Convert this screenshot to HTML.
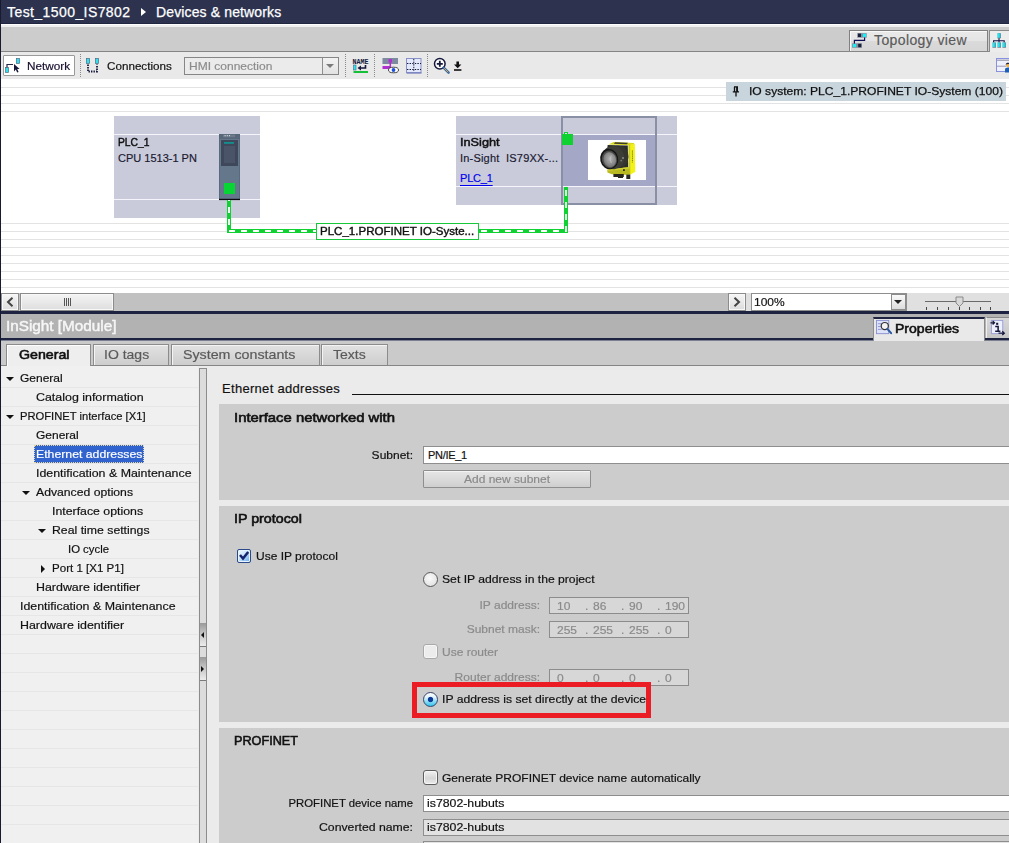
<!DOCTYPE html>
<html>
<head>
<meta charset="utf-8">
<title>Devices &amp; networks</title>
<style>
html,body{margin:0;padding:0;}
body{width:1009px;height:843px;overflow:hidden;position:relative;background:#fff;font-family:"Liberation Sans",sans-serif;font-size:12px;color:#000;}
.a{position:absolute;}
.t{position:absolute;white-space:nowrap;line-height:16px;height:16px;font-size:12px;-webkit-text-stroke:0.18px;}
.b{font-weight:bold;}
.g{color:#8a8a8a;}
.r{text-align:right;}
.gl{position:absolute;left:1px;width:1008px;height:1px;background:#e3e3e3;}
.sec{position:absolute;left:219px;width:790px;background:#cccccc;}
.inp{position:absolute;left:423px;width:590px;height:15px;border:1px solid #8e8e8e;background:#fff;}
.ipf{position:absolute;left:549px;width:138px;height:15px;border:1px solid #8c8c8c;background:#d7d7d7;}
.cb{position:absolute;width:13px;height:13px;border:1px solid #a9a9a9;border-radius:3px;background:linear-gradient(#f2f2f2,#d6d6d6 55%,#ececec);box-shadow:inset 0 0 0 1px #f6f6f6;}
.tr{position:absolute;left:1px;width:197px;height:1px;background:#e6e6e6;}
.tab{position:absolute;top:344px;height:20px;border:1px solid #8c8c8c;border-bottom:none;background:linear-gradient(#e2e2e2,#cdcdcd);box-shadow:inset 1px 1px 0 #f4f4f4;}
</style>
</head>
<body>

<!-- ===== title bar ===== -->
<div class="a" style="left:0;top:0;width:1009px;height:24px;background:#2d334f;"></div>
<div class="t" style="left:7px;top:3px;font-size:14px;line-height:18px;height:18px;color:#fff;letter-spacing:0.42px;-webkit-text-stroke:0.25px #fff;">Test_1500_IS7802</div>
<div class="a" style="left:141px;top:8px;width:0;height:0;border-left:5px solid #fff;border-top:4px solid transparent;border-bottom:4px solid transparent;"></div>
<div class="t" style="left:156px;top:3px;font-size:14px;line-height:18px;height:18px;color:#fff;letter-spacing:0.13px;-webkit-text-stroke:0.25px #fff;">Devices &amp; networks</div>

<!-- ===== view tab band ===== -->
<div class="a" style="left:0;top:23px;width:1009px;height:1px;background:#20263f;"></div>
<div class="a" style="left:0;top:24px;width:1009px;height:3px;background:#efefef;border-top:1px solid #fdfdfd;box-sizing:border-box;"></div>
<div class="a" style="left:0;top:27px;width:1009px;height:24px;background:#cccccc;"></div>
<div class="a" style="left:0;top:51px;width:1009px;height:1px;background:#858585;"></div>

<!-- ===== toolbar ===== -->
<div class="a" id="toolbar" style="left:0;top:52px;width:1009px;height:27px;background:#e9e9e9;"></div>
<!-- topology tab -->
<div class="a" style="left:849px;top:30px;width:139px;height:21px;border:1px solid #808080;border-bottom:none;background:linear-gradient(#e9e9e9 0,#e4e4e4 50%,#dadada 52%,#d6d6d6 100%);box-shadow:inset 1px 1px 0 #f8f8f8;box-sizing:border-box;"></div>
<svg class="a" style="left:851px;top:32px;" width="18" height="17" viewBox="851 32 18 17">
  <rect x="857.2" y="33.1" width="9.5" height="4.6" fill="#868c9e"/>
  <rect x="858" y="33.6" width="3" height="3.4" fill="#1c1f38"/>
  <rect x="862.9" y="33.7" width="3.2" height="3.3" fill="#18f0f4"/>
  <rect x="852.1" y="43.3" width="9.9" height="4.5" fill="#868c9e"/>
  <rect x="853" y="43.9" width="3.1" height="3.3" fill="#18f0f4"/>
  <rect x="858.2" y="43.8" width="3" height="3.4" fill="#1c1f38"/>
  <path d="M864.6 37.5 V40.4 H854.4 V43.4" fill="none" stroke="#101058" stroke-width="1.2"/>
</svg>
<div class="t" id="topo" style="left:874px;top:31px;font-size:14px;line-height:18px;height:18px;color:#5a5a5a;letter-spacing:0.39px;">Topology view</div>
<!-- next (active) tab -->
<div class="a" style="left:989px;top:30px;width:24px;height:22px;border:1px solid #8a8a8a;border-bottom:none;background:#ececec;box-sizing:border-box;"></div>
<svg class="a" style="left:990px;top:32px;" width="19" height="17" viewBox="990 32 19 17">
  <defs><linearGradient id="cy" x1="0" y1="0" x2="1" y2="0"><stop offset="0" stop-color="#7af4f8"/><stop offset="0.5" stop-color="#10dce8"/><stop offset="1" stop-color="#30c8d8"/></linearGradient></defs>
  <path d="M999 38 V42.5 M993.6 42.5 V40.8 H1004.2 V42.5" fill="none" stroke="#101048" stroke-width="1.1"/>
  <rect x="997.3" y="33.3" width="3.6" height="5" fill="#6a7488"/>
  <rect x="997.3" y="33.3" width="3.1" height="4.5" fill="url(#cy)"/>
  <rect x="992.4" y="42.5" width="3.6" height="5.2" fill="#6a7488"/>
  <rect x="992.4" y="42.5" width="3.1" height="4.6" fill="url(#cy)"/>
  <rect x="997.4" y="42.5" width="3.6" height="5.2" fill="#6a7488"/>
  <rect x="997.4" y="42.5" width="3.1" height="4.6" fill="url(#cy)"/>
  <rect x="1002.4" y="42.5" width="3.6" height="5.2" fill="#6a7488"/>
  <rect x="1002.4" y="42.5" width="3.1" height="4.6" fill="url(#cy)"/>
</svg>

<!-- Network button -->
<div class="a" style="left:3px;top:55px;width:72px;height:21px;border:1px solid #9a9a9a;background:#fff;box-sizing:border-box;border-radius:1px;"></div>
<svg class="a" style="left:4px;top:56px;" width="20" height="18" viewBox="0 0 20 18">
  <rect x="12.5" y="2.5" width="3" height="5" fill="#2fe0f0" stroke="#4a6a80" stroke-width="0.7"/>
  <rect x="1.5" y="11.5" width="3" height="5" fill="#2fe0f0" stroke="#4a6a80" stroke-width="0.7"/>
  <path d="M3 11.5 V8.5 H9" fill="none" stroke="#23284a" stroke-width="1.2"/>
  <path d="M10 8 L10 15.5 L11.8 13.6 L13.2 16.6 L14.6 15.9 L13.2 13 L15.6 13 Z" fill="#15183a"/>
</svg>
<div class="t" id="netw" style="left:27px;top:58px;font-size:11px;color:#1a1030;transform:scaleX(1.0686);transform-origin:left center;">Network</div>
<!-- separator -->
<div class="a vs" style="left:80px;top:54px;height:23px;border-left:1px dotted #8a8a8a;"></div>
<!-- Connections -->
<svg class="a" style="left:85px;top:57px;" width="16" height="17" viewBox="0 0 16 17">
  <rect x="1.5" y="1.5" width="3" height="5" fill="#2fe0f0" stroke="#4a6a80" stroke-width="0.7"/>
  <rect x="10.5" y="1.5" width="3" height="5" fill="#2fe0f0" stroke="#4a6a80" stroke-width="0.7"/>
  <path d="M3 7.5 V14.5 H12 V7.5" fill="none" stroke="#15183a" stroke-width="1.8" stroke-dasharray="1.4 1.1" stroke-linejoin="miter"/>
</svg>
<div class="t" id="conn" style="left:107px;top:58px;font-size:11px;color:#111;transform:scaleX(1.0603);transform-origin:left center;">Connections</div>
<!-- combobox -->
<div class="a" style="left:184px;top:57px;width:155px;height:18px;border:1px solid #868686;background:#ebebeb;box-sizing:border-box;"></div>
<div class="a" style="left:322px;top:58px;width:16px;height:16px;border-left:1px solid #8e8e8e;background:linear-gradient(#f2f2f2,#e2e2e2);box-sizing:border-box;"></div>
<div class="a" style="left:326px;top:64px;width:0;height:0;border-top:4px solid #7a7a7a;border-left:4px solid transparent;border-right:4px solid transparent;"></div>
<div class="t g" id="hmi" style="left:189px;top:58px;font-size:11px;color:#8c8c8c;transform:scaleX(1.0908);transform-origin:left center;">HMI connection</div>
<!-- separators -->
<div class="a vs" style="left:345px;top:54px;height:23px;border-left:1px dotted #8a8a8a;"></div>
<div class="a vs" style="left:374px;top:54px;height:23px;border-left:1px dotted #8a8a8a;"></div>
<div class="a vs" style="left:427px;top:54px;height:23px;border-left:1px dotted #8a8a8a;"></div>
<!-- NAME icon -->
<svg class="a" style="left:352px;top:57px;" width="18" height="18" viewBox="0 0 18 18">
  <text x="0.5" y="7" font-family="Liberation Mono" font-weight="bold" font-size="7" fill="#15183a" textLength="16" lengthAdjust="spacingAndGlyphs">NAME</text>
  <rect x="1.5" y="8" width="2.5" height="5" fill="#2fe0f0" stroke="#4a6a80" stroke-width="0.6"/>
  <path d="M13.5 8 V11 H7" fill="none" stroke="#15183a" stroke-width="1.6"/>
  <path d="M9 8.5 L5.5 11 L9 13.5 Z" fill="#15183a"/>
  <rect x="1.5" y="14" width="14.5" height="2" fill="#18c03a"/>
</svg>
<!-- icon 2 -->
<svg class="a" style="left:382px;top:57px;" width="18" height="18" viewBox="0 0 18 18">
  <rect x="0.5" y="1" width="15.5" height="6" fill="#7e8aa0"/>
  <rect x="6.5" y="2" width="3.5" height="3.5" fill="#b030d0"/>
  <rect x="7.5" y="5" width="1.6" height="5" fill="#b030d0"/>
  <rect x="0.5" y="9" width="8.5" height="3" fill="#b030d0"/>
  <ellipse cx="11.5" cy="13" rx="5" ry="2.8" fill="#fff" stroke="#333" stroke-width="0.9"/>
  <circle cx="11.5" cy="13" r="1.9" fill="#1d4fe0"/>
</svg>
<!-- icon 3 -->
<svg class="a" style="left:406px;top:57px;" width="17" height="18" viewBox="0 0 17 18">
  <rect x="0.5" y="1.5" width="14.5" height="14" fill="#e4e8fb" stroke="#8890c8" stroke-width="1"/>
  <path d="M0.5 16 H15.5" stroke="#7d86c0" stroke-width="1.4"/>
  <path d="M7.8 2 V15 M1 6.5 H15 M1 12.5 H15" stroke="#15183a" stroke-width="1" stroke-dasharray="1.4 1.2" fill="none"/>
</svg>
<!-- zoom icon -->
<svg class="a" style="left:433px;top:57px;" width="18" height="18" viewBox="0 0 18 18">
  <circle cx="6.8" cy="6.8" r="5.3" fill="#fff" stroke="#15183a" stroke-width="1.5"/>
  <path d="M3.8 6.8 H9.8 M6.8 3.8 V9.8" stroke="#15183a" stroke-width="1.8"/>
  <path d="M10.6 10.6 L15.6 15.6" stroke="#3d6a9e" stroke-width="2.6" stroke-linecap="round"/>
  <path d="M11.2 11.2 L15.2 15.2" stroke="#d8b060" stroke-width="0.9"/>
</svg>
<!-- download arrow -->
<svg class="a" style="left:453px;top:60px;" width="10" height="12" viewBox="0 0 10 12">
  <path d="M3.4 1.5 H6.0 V4.6 H8.4 L4.7 8.2 L1.0 4.6 H3.4 Z" fill="#111"/>
  <rect x="1" y="9.2" width="7.4" height="1.6" fill="#111"/>
</svg>
<!-- right icon -->
<svg class="a" style="left:996px;top:57px;" width="13" height="17" viewBox="0 0 13 17">
  <rect x="0.5" y="1.5" width="14" height="13" fill="#f0f1ff" stroke="#8890e0" stroke-width="1"/>
  <path d="M1 3.2 H13" stroke="#9a9aa8" stroke-width="1.2"/>
  <path d="M1 9.2 H10" stroke="#9a9ab0" stroke-width="1"/>
  <circle cx="12" cy="8.2" r="2" fill="#e8b45c"/>
  <path d="M9.8 7.2 Q12 4.8 14 7" fill="#1a1a30" stroke="#1a1a30" stroke-width="0.8"/>
  <path d="M9 15.5 V12.5 Q9 10.4 12 10.4 Q15 10.4 15 12.5 V15.5 Z" fill="#1f5fb0"/>
</svg>


<!-- ===== canvas ===== -->
<div class="a" id="canvas" style="left:0;top:79px;width:1009px;height:214px;background:#fff;"></div>
<div class="gl" style="top:87px;"></div>
<div class="gl" style="top:95px;"></div>
<div class="gl" style="top:103px;"></div>
<div class="gl" style="top:111px;"></div>
<div class="gl" style="top:223px;"></div>
<div class="gl" style="top:231px;"></div>
<div class="gl" style="top:239px;"></div>
<div class="gl" style="top:247px;"></div>
<div class="gl" style="top:255px;"></div>
<div class="gl" style="top:263px;"></div>
<div class="gl" style="top:271px;"></div>
<div class="gl" style="top:279px;"></div>
<div class="gl" style="top:287px;"></div>
<!-- IO system label -->
<div class="a" style="left:726px;top:82px;width:280px;height:19px;background:#c8d5dc;"></div>
<svg class="a" style="left:732px;top:86px;" width="8" height="11" viewBox="0 0 8 11">
  <path d="M2 0.8 H6 M2.5 1 V5.5 M5.3 1 V5.5 M0.8 5.8 H7 M4 6 V10.5" fill="none" stroke="#111" stroke-width="1.3"/>
  <rect x="4.2" y="1" width="1.6" height="4.5" fill="#111"/>
</svg>
<div class="t" id="iosys" style="left:749px;top:83px;font-size:11px;color:#111;-webkit-text-stroke:0.25px #111;transform:scaleX(1.0971);transform-origin:left center;">IO system: PLC_1.PROFINET IO-System (100)</div>

<!-- PLC device -->
<div class="a" style="left:114px;top:116px;width:146px;height:102px;background:#c9cbdb;"></div>
<div class="a" style="left:114px;top:134px;width:146px;height:1px;background:#f4f4fa;"></div>
<div class="a" style="left:114px;top:199px;width:146px;height:1px;background:#f4f4fa;"></div>
<div class="t b" id="plc1" style="left:118px;top:134px;color:#111;font-size:11px;font-weight:normal;-webkit-text-stroke:0.45px #111;transform:scaleX(0.9364);transform-origin:left center;">PLC_1</div>
<div class="t" id="cpu" style="left:118px;top:150px;font-size:11px;color:#1a1a30;">CPU 1513-1 PN</div>
<svg class="a" style="left:219px;top:134px;" width="21" height="67" viewBox="0 0 21 67">
  <rect x="0" y="0" width="21" height="66" fill="#65778a"/>
  <rect x="0" y="0" width="21" height="5" fill="#58677a"/>
  <rect x="4" y="0.6" width="12" height="2.6" fill="#6c7a8a"/>
  <rect x="5.6" y="1.2" width="1" height="1" fill="#e8ecf0"/><rect x="7.8" y="1.2" width="1" height="1" fill="#e8ecf0"/><rect x="10" y="1.2" width="1" height="1" fill="#e8ecf0"/>
  <rect x="0" y="0" width="0.8" height="66" fill="#56677a"/>
  <rect x="20.2" y="0" width="0.8" height="66" fill="#56677a"/>
  <rect x="2" y="6" width="17" height="26" fill="#3f475b"/>
  <rect x="5" y="8" width="10" height="1.8" fill="#13908e"/>
  <rect x="5" y="12" width="11" height="17" fill="#495469"/>
  <rect x="5" y="49" width="11" height="11" fill="#08d436"/>
  <rect x="0" y="64.8" width="21" height="1.3" fill="#0c0c12"/>
</svg>

<!-- InSight device -->
<div class="a" style="left:456px;top:116px;width:221px;height:89px;background:#c9cbdb;"></div>
<div class="a" style="left:563px;top:135px;width:93px;height:52px;background:#a4a8c6;"></div>
<div class="a" style="left:456px;top:134px;width:221px;height:1px;background:#f4f4fa;"></div>
<div class="a" style="left:456px;top:186px;width:221px;height:1px;background:#f4f4fa;"></div>
<div class="a" style="left:561px;top:116px;width:96px;height:89px;border:2px solid #8990a6;box-sizing:border-box;"></div>
<div class="t b" id="ins" style="left:460px;top:134px;color:#111;font-size:11px;font-weight:normal;-webkit-text-stroke:0.45px #111;transform:scaleX(1.1562);transform-origin:left center;">InSight</div>
<div class="t" id="ins2" style="left:460px;top:150px;font-size:11px;color:#1a1a30;white-space:pre;letter-spacing:0.2px;">In-Sight  IS79XX-...</div>
<div class="t" id="plclink" style="left:460px;top:170px;font-size:11px;color:#0000ee;text-decoration:underline;text-underline-offset:3px;letter-spacing:-0.2px;">PLC_1</div>
<div class="a" style="left:588px;top:140px;width:58px;height:40px;background:#fff;"></div>
<svg class="a" id="cam" style="left:588px;top:140px;" width="58" height="40" viewBox="0 0 58 40">
  <defs>
    <filter id="bl" x="-10%" y="-10%" width="120%" height="120%"><feGaussianBlur stdDeviation="0.35"/></filter>
    <radialGradient id="lg" cx="0.55" cy="0.45" r="0.6"><stop offset="0" stop-color="#b4b4b4"/><stop offset="0.6" stop-color="#8c8c8c"/><stop offset="1" stop-color="#6a6a6a"/></radialGradient>
  </defs>
  <g filter="url(#bl)">
    <!-- top yellow -->
    <polygon points="20.5,4.4 25.5,1.9 45.8,3.0 46.8,4.4 41,5.2" fill="#d8d820"/>
    <polygon points="27,2.3 40,2.8 39,4.2 26,3.8" fill="#3a3a28"/>
    <!-- right yellow face -->
    <polygon points="40.6,4.6 46.8,4.2 47.3,31.8 41.6,35" fill="#f2f214"/>
    <polygon points="40.4,4.6 42.2,4.6 42.4,34.4 40.6,34.8" fill="#c9c92a"/>
    <path d="M44.4 10.5 V22.5" stroke="#6a6a20" stroke-width="0.9" stroke-dasharray="1.2 0.7"/>
    <!-- black front body -->
    <polygon points="19.6,5 39.8,5.4 40.2,28 33,29.4 19.4,9" fill="#2c2e2a"/>
    <!-- lower yellow -->
    <polygon points="19.4,29.6 41.6,27 41.6,35 24,34.2 19.4,32.4" fill="#b9b920"/>
    <polygon points="19.4,29.6 41.6,27 41.6,28.4 19.4,31" fill="#d0d030"/>
    <rect x="35" y="29.2" width="1.8" height="1.8" fill="#303020"/>
    <!-- connectors -->
    <rect x="25.4" y="34" width="10.4" height="3" fill="#26261e"/>
    <rect x="30" y="36" width="5" height="2" fill="#26261e"/>
    <rect x="38.3" y="34.6" width="4" height="4.4" fill="#2c2c24"/>
    <!-- lens barrel -->
    <ellipse cx="30" cy="17" rx="10.5" ry="11.2" fill="#34362f"/>
    <ellipse cx="25" cy="17.6" rx="11.2" ry="11.6" transform="rotate(-12 25 17.6)" fill="#3c3e38"/>
    <ellipse cx="21.2" cy="19" rx="9" ry="10.4" transform="rotate(-14 21.2 19)" fill="#161614"/>
    <ellipse cx="21.5" cy="19.3" rx="7.6" ry="8.9" transform="rotate(-14 21.5 19.3)" fill="#4a4a48"/>
    <ellipse cx="21.8" cy="19.7" rx="6.3" ry="7.6" transform="rotate(-14 21.8 19.7)" fill="url(#lg)"/>
    <path d="M23.3 15.5 Q21 19 23.3 23" stroke="#c8c8c8" stroke-width="1" fill="none" opacity="0.7"/>
    <circle cx="35" cy="18" r="1" fill="#8a8a86"/>
    <circle cx="33.2" cy="20.6" r="0.9" fill="#7a7a76"/>
  </g>
</svg>
<!-- green port + nub -->
<div class="a" style="left:564px;top:132px;width:4px;height:3px;border:1px solid #0fd232;box-sizing:border-box;background:#eafbe9;"></div>
<div class="a" style="left:562px;top:134px;width:11px;height:11px;background:#0fd232;"></div>

<!-- green connection -->
<svg class="a" style="left:0;top:180px;" width="700" height="60" viewBox="0 180 700 60">
  <path d="M229 200 V231 H566 V187" fill="none" stroke="#0fd232" stroke-width="4" stroke-linejoin="miter"/>
  <path d="M229 200 V231 H566 V187" fill="none" stroke="#fff" stroke-width="1.8" stroke-dasharray="6 6" stroke-dashoffset="5"/>
</svg>
<!-- label -->
<div class="a" style="left:316px;top:223px;width:163px;height:17px;border:1px solid #18c83a;background:#fff;box-sizing:border-box;"></div>
<div class="t" id="pnlabel" style="left:320px;top:223px;color:#111;font-size:11px;font-weight:normal;-webkit-text-stroke:0.4px #111;transform:scaleX(1.0481);transform-origin:left center;">PLC_1.PROFINET IO-Syste...</div>


<!-- ===== scroll row ===== -->
<div class="a" style="left:0;top:293px;width:1009px;height:18px;background:#c1c1c1;"></div>


<!-- scroll row widgets -->
<div class="a" style="left:746px;top:293px;width:263px;height:18px;background:#e0e0e0;"></div>
<div class="a" style="left:1px;top:293px;width:18px;height:18px;border:1px solid #8c8c8c;box-shadow:inset 0 0 0 1px #f8f8f8;background:linear-gradient(#f6f6f6,#dcdcdc);box-sizing:border-box;"></div>
<svg class="a" style="left:5px;top:297px;" width="10" height="10" viewBox="0 0 10 10"><path d="M7.5 0.8 L3 5 L7.5 9.2" fill="none" stroke="#444" stroke-width="2"/></svg>
<div class="a" style="left:20px;top:293px;width:94px;height:18px;border:1px solid #8c8c8c;box-shadow:inset 0 0 0 1px #f8f8f8;background:linear-gradient(#f4f4f4,#dedede);box-sizing:border-box;"></div>
<div class="a" style="left:64px;top:298px;width:1px;height:8px;background:#555;box-shadow:2px 0 0 #555,4px 0 0 #555,6px 0 0 #555;"></div>
<div class="a" style="left:728px;top:293px;width:18px;height:18px;border:1px solid #8c8c8c;box-shadow:inset 0 0 0 1px #f8f8f8;background:linear-gradient(#f6f6f6,#dcdcdc);box-sizing:border-box;"></div>
<svg class="a" style="left:732px;top:297px;" width="10" height="10" viewBox="0 0 10 10"><path d="M2.5 0.8 L7 5 L2.5 9.2" fill="none" stroke="#444" stroke-width="2"/></svg>
<div class="a" style="left:751px;top:293px;width:156px;height:18px;border:1px solid #8e8e8e;background:#fff;box-sizing:border-box;"></div>
<div class="a" style="left:891px;top:294px;width:15px;height:16px;border:1px solid #8c8c8c;background:linear-gradient(#fafafa,#dcdcdc);box-sizing:border-box;"></div>
<div class="a" style="left:894px;top:300px;width:0;height:0;border-top:4px solid #222;border-left:4px solid transparent;border-right:4px solid transparent;"></div>
<div class="t" id="z100" style="left:754px;top:294px;font-size:11px;color:#111;transform:scaleX(1.0911);transform-origin:left center;">100%</div>
<div class="a" style="left:925px;top:301px;width:66px;height:1px;background:#6a6a6a;"></div>
<div class="a" style="left:926px;top:307px;width:1px;height:3px;background:#444;box-shadow:11px 0 0 #444,22px 0 0 #444,33px 0 0 #444,43px 0 0 #444,54px 0 0 #444,64px 0 0 #444;"></div>
<svg class="a" style="left:955px;top:296px;" width="9" height="12" viewBox="0 0 9 12"><path d="M1 1 H8 V7 L4.5 10.5 L1 7 Z" fill="#d8d8d8" stroke="#8a8a8a" stroke-width="1"/></svg>

<!-- ===== inspector header ===== -->
<div class="a" style="left:0;top:311px;width:1009px;height:3px;background:#1d2340;"></div>
<div class="a" style="left:0;top:314px;width:1009px;height:24px;background:#b2b2b2;"></div>
<div class="a" style="left:0;top:338px;width:1009px;height:2px;background:#1d2340;"></div>
<div class="a" style="left:0;top:340px;width:1009px;height:25px;background:#cacaca;border-top:1px solid #7b7f92;box-sizing:border-box;"></div>
<div class="a" style="left:0;top:365px;width:1009px;height:1px;background:#858585;"></div>


<div class="t" id="insmod" style="left:6px;top:316px;line-height:20px;height:20px;color:#f6f6f6;font-size:14px;font-weight:normal;-webkit-text-stroke:0.45px #f6f6f6;transform:scaleX(1.0922);transform-origin:left center;">InSight [Module]</div>
<!-- properties tab -->
<div class="a" style="left:873px;top:317px;width:112px;height:24px;background:#e9e9e9;border-top:2px solid #1d2340;border-left:1px solid #8e8e8e;border-right:1px solid #8a8a8a;box-sizing:border-box;"></div>
<svg class="a" style="left:876px;top:319px;" width="17" height="17" viewBox="0 0 18 18">
  <rect x="0.5" y="1.5" width="13" height="14" fill="#dfe3fa" stroke="#8a92d0" stroke-width="1"/>
  <path d="M2 5 H6 M2 8 H5 M2 11 H6" stroke="#8a92d0" stroke-width="1"/>
  <circle cx="9.3" cy="7.5" r="3.8" fill="#f4f4f4" stroke="#333" stroke-width="1.3"/>
  <path d="M12 10.5 L16 15" stroke="#2b5aa0" stroke-width="2.2" stroke-linecap="round"/>
</svg>
<div class="t b" id="props" style="left:895px;top:320px;line-height:18px;height:18px;color:#111;font-size:13px;font-weight:normal;-webkit-text-stroke:0.55px #111;transform:scaleX(1.0802);transform-origin:left center;">Properties</div>
<div class="a" style="left:986px;top:317px;width:24px;height:21px;background:linear-gradient(#d8d8d8,#c6c6c6);border-left:1px solid #efefef;border-top:1px solid #8a8a8a;box-sizing:border-box;"></div>
<svg class="a" style="left:990px;top:319px;" width="17" height="17" viewBox="0 0 18 18">
  <rect x="1.5" y="1.5" width="12" height="14" fill="#eef0ff" stroke="#9aa0d8" stroke-width="1"/>
  <path d="M0.5 4 H4.5 M2.8 2.2 L4.8 4 L2.8 5.8" fill="none" stroke="#15183a" stroke-width="1.3"/>
  <rect x="6.5" y="4" width="2.2" height="2.2" fill="#15183a"/>
  <path d="M5.5 8 H8.6 V13 M5.5 13 H11" stroke="#15183a" stroke-width="1.6" fill="none"/>
  <path d="M9 15 H15 M13 13 L15.2 15 L13 17" fill="none" stroke="#15183a" stroke-width="1.3"/>
</svg>
<!-- tabs -->
<div class="a" style="left:6px;top:344px;width:85px;height:23px;border:1px solid #8c8c8c;border-bottom:none;background:#eeeeee;box-sizing:border-box;box-shadow:inset 1px 1px 0 #fff;"></div>
<div class="t b" id="tgen" style="left:19px;top:346px;line-height:18px;height:18px;color:#111;font-size:13px;font-weight:normal;-webkit-text-stroke:0.6px #111;transform:scaleX(1.0919);transform-origin:left center;">General</div>
<div class="tab" style="left:93px;width:76px;box-sizing:border-box;height:21px;"></div>
<div class="t" id="tio" style="left:104px;top:346px;font-size:13px;line-height:18px;height:18px;color:#5a5a5a;transform:scaleX(1.0768);transform-origin:left center;">IO tags</div>
<div class="tab" style="left:171px;width:149px;box-sizing:border-box;height:21px;"></div>
<div class="t" id="tsys" style="left:183px;top:346px;font-size:13px;line-height:18px;height:18px;color:#5a5a5a;transform:scaleX(1.0956);transform-origin:left center;">System constants</div>
<div class="tab" style="left:321px;width:67px;box-sizing:border-box;height:21px;"></div>
<div class="t" id="ttxt" style="left:333px;top:346px;font-size:13px;line-height:18px;height:18px;color:#5a5a5a;transform:scaleX(1.0772);transform-origin:left center;">Texts</div>

<!-- ===== lower panel ===== -->
<div class="a" style="left:0;top:366px;width:1009px;height:477px;background:#ebebeb;"></div>
<div class="a" id="tree" style="left:1px;top:366px;width:197px;height:477px;background:#f0f0f0;"></div>

<!-- tree -->
<div class="tr" style="top:387px;"></div>
<div class="tr" style="top:406px;"></div>
<div class="tr" style="top:425px;"></div>
<div class="tr" style="top:444px;"></div>
<div class="tr" style="top:463px;"></div>
<div class="tr" style="top:482px;"></div>
<div class="tr" style="top:501px;"></div>
<div class="tr" style="top:520px;"></div>
<div class="tr" style="top:539px;"></div>
<div class="tr" style="top:558px;"></div>
<div class="tr" style="top:577px;"></div>
<div class="tr" style="top:596px;"></div>
<div class="tr" style="top:615px;"></div>
<div class="tr" style="top:634px;"></div>
<div class="tr" style="top:653px;"></div>
<div class="tr" style="top:672px;"></div>
<div class="tr" style="top:691px;"></div>
<div class="tr" style="top:710px;"></div>
<div class="tr" style="top:729px;"></div>
<div class="tr" style="top:748px;"></div>
<div class="tr" style="top:767px;"></div>
<div class="tr" style="top:786px;"></div>
<div class="tr" style="top:805px;"></div>
<div class="tr" style="top:824px;"></div>
<div class="t tt" id="tr0" style="left:20px;top:370px;color:#111;font-size:11px;transform:scaleX(1.091);transform-origin:left center;">General</div>
<div class="a" style="left:6px;top:377px;width:0;height:0;border-top:4px solid #111;border-left:4px solid transparent;border-right:4px solid transparent;"></div>
<div class="t tt" id="tr1" style="left:36px;top:389px;color:#111;font-size:11px;transform:scaleX(1.1287);transform-origin:left center;">Catalog information</div>
<div class="t tt" id="tr2" style="left:20px;top:408px;color:#111;font-size:11px;transform:scaleX(1.0181);transform-origin:left center;">PROFINET interface [X1]</div>
<div class="a" style="left:6px;top:415px;width:0;height:0;border-top:4px solid #111;border-left:4px solid transparent;border-right:4px solid transparent;"></div>
<div class="t tt" id="tr3" style="left:36px;top:427px;color:#111;font-size:11px;transform:scaleX(1.091);transform-origin:left center;">General</div>
<div class="a" style="left:34px;top:445px;width:110px;height:18px;background:#3163cf;border:1px dotted #e8d8a0;box-sizing:border-box;"></div>
<div class="t tt" id="tr4" style="left:36px;top:446px;color:#fff;font-size:11px;transform:scaleX(1.1155);transform-origin:left center;">Ethernet addresses</div>
<div class="t tt" id="tr5" style="left:36px;top:465px;color:#111;font-size:11px;transform:scaleX(1.1254);transform-origin:left center;">Identification &amp; Maintenance</div>
<div class="t tt" id="tr6" style="left:36px;top:484px;color:#111;font-size:11px;transform:scaleX(1.1093);transform-origin:left center;">Advanced options</div>
<div class="a" style="left:22px;top:491px;width:0;height:0;border-top:4px solid #111;border-left:4px solid transparent;border-right:4px solid transparent;"></div>
<div class="t tt" id="tr7" style="left:52px;top:503px;color:#111;font-size:11px;transform:scaleX(1.1201);transform-origin:left center;">Interface options</div>
<div class="t tt" id="tr8" style="left:52px;top:522px;color:#111;font-size:11px;transform:scaleX(1.1156);transform-origin:left center;">Real time settings</div>
<div class="a" style="left:38px;top:529px;width:0;height:0;border-top:4px solid #111;border-left:4px solid transparent;border-right:4px solid transparent;"></div>
<div class="t tt" id="tr9" style="left:68px;top:541px;color:#111;font-size:11px;transform:scaleX(1.0307);transform-origin:left center;">IO cycle</div>
<div class="t tt" id="tr10" style="left:52px;top:560px;color:#111;font-size:11px;transform:scaleX(1.0502);transform-origin:left center;">Port 1 [X1 P1]</div>
<div class="a" style="left:41px;top:565px;width:0;height:0;border-left:4px solid #111;border-top:4px solid transparent;border-bottom:4px solid transparent;"></div>
<div class="t tt" id="tr11" style="left:36px;top:579px;color:#111;font-size:11px;transform:scaleX(1.1279);transform-origin:left center;">Hardware identifier</div>
<div class="t tt" id="tr12" style="left:20px;top:598px;color:#111;font-size:11px;transform:scaleX(1.1254);transform-origin:left center;">Identification &amp; Maintenance</div>
<div class="t tt" id="tr13" style="left:20px;top:617px;color:#111;font-size:11px;transform:scaleX(1.1279);transform-origin:left center;">Hardware identifier</div>
<!-- splitter -->
<div class="a" style="left:199px;top:368px;width:8px;height:480px;border:1px solid #8c8c8c;background:#dcdcdc;box-sizing:border-box;"></div>
<div class="a" style="left:200px;top:623px;width:6px;height:24px;background:linear-gradient(#999,#c4c4c4 45%,#ececec);border-bottom:1px solid #7a7a7a;box-sizing:border-box;"></div>
<div class="a" style="left:200px;top:657px;width:6px;height:24px;background:linear-gradient(#999,#c4c4c4 45%,#ececec);border-bottom:1px solid #7a7a7a;box-sizing:border-box;"></div>
<div class="a" style="left:201px;top:632px;width:0;height:0;border-right:3px solid #111;border-top:3px solid transparent;border-bottom:3px solid transparent;"></div>
<div class="a" style="left:201px;top:666px;width:0;height:0;border-left:3px solid #111;border-top:3px solid transparent;border-bottom:3px solid transparent;"></div>

<!-- content -->

<div class="t" id="eth" style="letter-spacing:0.3px;left:222px;top:380px;font-size:13px;line-height:18px;height:18px;color:#111;">Ethernet addresses</div>
<div class="a" style="left:352px;top:394px;width:657px;height:1px;background:#111;"></div>

<!-- section 1 -->
<div class="sec" style="top:404px;height:96px;"></div>
<div class="t b" id="s1" style="left:234px;top:409px;line-height:18px;height:18px;color:#111;font-size:13px;font-weight:normal;-webkit-text-stroke:0.6px #111;transform:scaleX(1.1426);transform-origin:left center;">Interface networked with</div>
<div class="t r" id="subn" style="left:313px;width:100px;top:447px;color:#111;font-size:11px;transform:scaleX(1.0911);transform-origin:right center;">Subnet:</div>
<div class="inp" style="top:446px;height:16px;"></div>
<div class="t" id="pnie" style="left:428px;top:447px;color:#111;font-size:11px;letter-spacing:-0.3px;">PN/IE_1</div>
<div class="a" style="left:423px;top:470px;width:168px;height:18px;border:1px solid #8e8e8e;border-radius:1px;background:linear-gradient(#e6e6e6,#cfcfcf);box-sizing:border-box;box-shadow:inset 0 1px 0 #f4f4f4;"></div>
<div class="t g" id="addsub" style="left:423px;width:168px;text-align:center;top:471px;color:#8a8a8a;font-size:11px;transform:scaleX(1.0909);transform-origin:center center;">Add new subnet</div>

<!-- section 2 -->
<div class="sec" style="top:506px;height:216px;"></div>
<div class="t b" id="s2" style="left:234px;top:510px;line-height:18px;height:18px;color:#111;font-size:13px;font-weight:normal;-webkit-text-stroke:0.6px #111;transform:scaleX(1.0965);transform-origin:left center;">IP protocol</div>
<!-- checked checkbox -->
<div class="a" style="left:237px;top:549px;width:14px;height:14px;border:1px solid #2a4a8a;border-radius:2px;background:linear-gradient(135deg,#f4faff 0%,#cfe6fb 40%,#62aaf0 100%);box-sizing:border-box;box-shadow:inset 0 0 0 1px #e8f4ff;"></div>
<svg class="a" style="left:238px;top:550px;" width="12" height="12" viewBox="0 0 12 12"><path d="M2 5 L5 8.6 L10.2 2" fill="none" stroke="#15246e" stroke-width="2.5"/></svg>
<div class="t" id="useip" style="left:256px;top:548px;color:#111;font-size:11px;transform:scaleX(1.0908);transform-origin:left center;">Use IP protocol</div>
<!-- radio 1 -->
<div class="a" style="left:423px;top:572px;width:15px;height:15px;border:1px solid #5a5a5a;border-radius:50%;background:radial-gradient(circle at 45% 40%,#fafafa,#dcdcdc);box-sizing:border-box;"></div>
<div class="t" id="setip" style="left:442px;top:571px;color:#111;font-size:11px;transform:scaleX(1.1056);transform-origin:left center;">Set IP address in the project</div>
<div class="t r g" id="ipaddr" style="left:440px;width:100px;top:597px;font-size:11px;transform:scaleX(1.0907);transform-origin:right center;">IP address:</div>
<div class="ipf" style="top:597px;"></div>
<div class="t g ipt" style="left:557px;top:598px;font-size:11px;transform:scaleX(1.0906);transform-origin:left center;">10</div><div class="t g ipt" style="left:585px;top:598px;font-size:11px;transform:scaleX(1.0918);transform-origin:left center;">.</div>
<div class="t g ipt" style="left:593px;top:598px;font-size:11px;transform:scaleX(1.0906);transform-origin:left center;">86</div><div class="t g ipt" style="left:621px;top:598px;font-size:11px;transform:scaleX(1.0918);transform-origin:left center;">.</div>
<div class="t g ipt" style="left:629px;top:598px;font-size:11px;transform:scaleX(1.0906);transform-origin:left center;">90</div><div class="t g ipt" style="left:657px;top:598px;font-size:11px;transform:scaleX(1.0918);transform-origin:left center;">.</div>
<div class="t g ipt" style="left:665px;top:598px;font-size:11px;transform:scaleX(1.0911);transform-origin:left center;">190</div>
<div class="t r g" id="snm" style="left:440px;width:100px;top:621px;font-size:11px;transform:scaleX(1.0908);transform-origin:right center;">Subnet mask:</div>
<div class="ipf" style="top:621px;"></div>
<div class="t g ipt" style="left:557px;top:622px;font-size:11px;transform:scaleX(1.0911);transform-origin:left center;">255</div><div class="t g ipt" style="left:585px;top:622px;font-size:11px;transform:scaleX(1.0918);transform-origin:left center;">.</div>
<div class="t g ipt" style="left:593px;top:622px;font-size:11px;transform:scaleX(1.0911);transform-origin:left center;">255</div><div class="t g ipt" style="left:621px;top:622px;font-size:11px;transform:scaleX(1.0918);transform-origin:left center;">.</div>
<div class="t g ipt" style="left:629px;top:622px;font-size:11px;transform:scaleX(1.0911);transform-origin:left center;">255</div><div class="t g ipt" style="left:657px;top:622px;font-size:11px;transform:scaleX(1.0918);transform-origin:left center;">.</div>
<div class="t g ipt" style="left:665px;top:622px;font-size:11px;transform:scaleX(1.0918);transform-origin:left center;">0</div>
<div class="cb" style="left:423px;top:644px;background:#ececec;"></div>
<div class="t g" id="userouter" style="left:442px;top:644px;font-size:11px;transform:scaleX(1.091);transform-origin:left center;">Use router</div>
<div class="t r g" id="rtr" style="left:440px;width:100px;top:669px;font-size:11px;transform:scaleX(1.091);transform-origin:right center;">Router address:</div>
<div class="ipf" style="top:669px;"></div>
<div class="t g ipt" style="left:557px;top:670px;font-size:11px;transform:scaleX(1.0918);transform-origin:left center;">0</div><div class="t g ipt" style="left:585px;top:670px;font-size:11px;transform:scaleX(1.0918);transform-origin:left center;">.</div>
<div class="t g ipt" style="left:593px;top:670px;font-size:11px;transform:scaleX(1.0918);transform-origin:left center;">0</div><div class="t g ipt" style="left:621px;top:670px;font-size:11px;transform:scaleX(1.0918);transform-origin:left center;">.</div>
<div class="t g ipt" style="left:629px;top:670px;font-size:11px;transform:scaleX(1.0918);transform-origin:left center;">0</div><div class="t g ipt" style="left:657px;top:670px;font-size:11px;transform:scaleX(1.0918);transform-origin:left center;">.</div>
<div class="t g ipt" style="left:665px;top:670px;font-size:11px;transform:scaleX(1.0918);transform-origin:left center;">0</div>
<!-- red rect -->
<div class="a" style="left:412px;top:682px;width:239px;height:36px;border:5px solid #ec1c24;background:#cccccc;box-sizing:border-box;"></div>
<!-- radio 2 selected -->
<div class="a" style="left:423px;top:692px;width:15px;height:15px;border:1.4px solid #39456e;border-radius:50%;background:radial-gradient(circle,#0b3a98 0,#0b3a98 2.2px,rgba(11,58,152,0) 3.1px),linear-gradient(#ffffff 0%,#dff1fb 35%,#7fd8f2 70%,#2ec6ec 100%);box-sizing:border-box;"></div>
<div class="t" id="ipdev" style="left:442px;top:691px;color:#111;font-size:11px;transform:scaleX(1.1061);transform-origin:left center;">IP address is set directly at the device</div>

<!-- section 3 -->
<div class="sec" style="top:728px;height:115px;"></div>
<div class="t b" id="s3" style="left:234px;top:732px;line-height:18px;height:18px;color:#111;font-size:13px;font-weight:normal;-webkit-text-stroke:0.6px #111;transform:scaleX(0.9736);transform-origin:left center;">PROFINET</div>
<div class="cb" style="left:423px;top:770px;border-color:#5e5e5e;"></div>
<div class="t" id="gen" style="left:442px;top:770px;color:#111;font-size:11px;transform:scaleX(1.0909);transform-origin:left center;">Generate PROFINET device name automatically</div>
<div class="t r" id="pndev" style="left:213px;width:200px;top:795px;color:#111;font-size:11px;transform:scaleX(1.0297);transform-origin:right center;">PROFINET device name</div>
<div class="inp" style="top:795px;"></div>
<div class="t" id="is1" style="left:427px;top:795px;color:#111;font-size:11px;transform:scaleX(1.1191);transform-origin:left center;">is7802-hubuts</div>
<div class="t r" id="conv" style="left:213px;width:200px;top:819px;color:#111;font-size:11px;transform:scaleX(1.1141);transform-origin:right center;">Converted name:</div>
<div class="inp" style="top:819px;background:#e2e2e2;"></div>
<div class="t" id="is2" style="left:427px;top:819px;color:#111;font-size:11px;transform:scaleX(1.1191);transform-origin:left center;">is7802-hubuts</div>
<div class="inp" style="top:841px;background:#e2e2e2;"></div>

<!-- left edge -->
<div class="a" style="left:0;top:0;width:1px;height:843px;background:#171a30;"></div>
</body>
</html>
